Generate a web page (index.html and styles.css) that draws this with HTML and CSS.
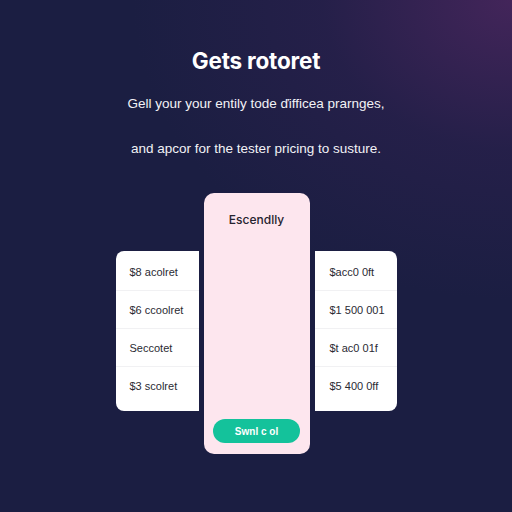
FILE: index.html
```html
<!DOCTYPE html>
<html>
<head>
<meta charset="utf-8">
<link rel="stylesheet" href="styles.css">
</head>
<body>
<main class="page">
  <h1 class="title">Gets rotoret</h1>
  <p class="sub sub-1">Gell your your entily tode ďifficea prarnges,</p>
  <p class="sub sub-2">and apcor for the tester pricing to susture.</p>
  <section class="plans">
    <div class="side side-left">
      <div class="row">$8 acolret</div>
      <div class="row">$6 ccoolret</div>
      <div class="row">Seccotet</div>
      <div class="row">$3 scolret</div>
    </div>
    <div class="center">
      <div class="center-title">Escendlly</div>
      <button class="cta">Swnl c ol</button>
    </div>
    <div class="side side-right">
      <div class="row">$acc0 0ft</div>
      <div class="row">$1 500 001</div>
      <div class="row">$t ac0 01f</div>
      <div class="row">$5 400 0ff</div>
    </div>
  </section>
</main>
</body>
</html>
```
FILE: styles.css
```css
html, body {
  margin: 0;
  padding: 0;
}
body {
  width: 512px;
  height: 512px;
  overflow: hidden;
  background:
    radial-gradient(ellipse 380px 300px at 512px 0px, rgba(84, 40, 100, 0.7), rgba(55, 34, 86, 0.35) 50%, rgba(27, 31, 66, 0) 100%),
    #1b1e42;
  font-family: Inter, "Open Sans", sans-serif;
}
.page {
  display: flex;
  flex-direction: column;
  align-items: center;
}
.title {
  margin: 47px 0 0;
  font-size: 22.5px;
  line-height: 28px;
  font-weight: 700;
  color: #ffffff;
  letter-spacing: -0.2px;
}
.sub {
  margin: 0;
  font-family: "Liberation Sans", Arial, sans-serif;
  font-size: 13.5px;
  line-height: 18px;
  color: #f2f2f6;
}
.sub-1 {
  margin-top: 20px;
}
.sub-2 {
  margin-top: 27px;
}
.plans {
  display: flex;
  align-items: flex-start;
  gap: 5px;
  margin-top: 35px;
}
.side {
  margin-top: 58px;
  width: 83px;
  background: #ffffff;
  padding: 2px 0 6px;
  display: flex;
  flex-direction: column;
}
.side-left {
  border-radius: 8px 0 0 8px;
}
.side-right {
  width: 82px;
  border-radius: 0 8px 8px 0;
}
.row {
  height: 38px;
  display: flex;
  align-items: center;
  font-family: "Liberation Sans", Arial, sans-serif;
  font-size: 11px;
  color: #2a2a33;
  border-bottom: 1px solid #f1f1f3;
  box-sizing: border-box;
}
.row:last-child {
  border-bottom: none;
}
.side-left .row {
  padding-left: 14px;
}
.side-right .row {
  padding-left: 15px;
}
.center {
  width: 106px;
  height: 261px;
  background: #fde6ee;
  border-radius: 10px;
  display: flex;
  flex-direction: column;
  align-items: center;
  box-sizing: border-box;
  padding-top: 19px;
}
.center-title {
  font-size: 12px;
  line-height: 16px;
  font-weight: 500;
  color: #26232f;
}
.cta {
  margin-top: auto;
  margin-bottom: 11px;
  width: 87px;
  height: 24px;
  border: none;
  border-radius: 12px;
  background: #14c29b;
  color: #ffffff;
  font-family: "Liberation Sans", Arial, sans-serif;
  font-size: 10px;
  font-weight: 700;
  padding: 0;
}
```
